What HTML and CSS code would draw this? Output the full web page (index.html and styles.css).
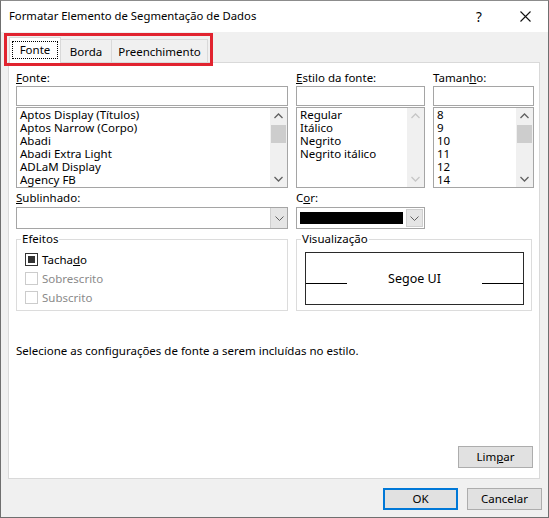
FILE: index.html
```html
<!DOCTYPE html>
<html lang="pt">
<head>
<meta charset="utf-8">
<title>Formatar Elemento de Segmentação de Dados</title>
<link rel="stylesheet" href="styles.css">
</head>
<body>
<div class="window">
  <div class="titlebar">
    <div class="title">Formatar Elemento de Segmentação de Dados</div>
    <div class="tb-btn help">?</div>
    <div class="tb-btn close">
      <svg width="11" height="11" viewBox="0 0 11 11"><path d="M0.5 0.5L10.5 10.5M10.5 0.5L0.5 10.5" stroke="#111" stroke-width="1.1" fill="none"/></svg>
    </div>
  </div>

  <div class="tabs">
    <div class="tab active"><span class="focus">Fonte</span></div>
    <div class="tab">Borda</div>
    <div class="tab">Preenchimento</div>
    <div class="highlight"></div>
  </div>

  <div class="panel">
    <div class="grid3">
      <div class="col">
        <div class="label"><u>F</u>onte:</div>
        <div class="input"></div>
        <div class="list">
          <div class="items">
            <div>Aptos Display (Títulos)</div>
            <div>Aptos Narrow (Corpo)</div>
            <div>Abadi</div>
            <div>Abadi Extra Light</div>
            <div>ADLaM Display</div>
            <div>Agency FB</div>
          </div>
          <div class="scrollbar">
            <svg class="arrow" width="17" height="17" viewBox="0 0 17 17"><polyline points="4.5,10 8.5,6 12.5,10" stroke="#606060" stroke-width="1.3" fill="none"/></svg>
            <div class="thumb"></div>
            <div class="track"></div>
            <svg class="arrow" width="17" height="17" viewBox="0 0 17 17"><polyline points="4.5,7 8.5,11 12.5,7" stroke="#606060" stroke-width="1.3" fill="none"/></svg>
          </div>
        </div>
      </div>
      <div class="col">
        <div class="label"><u>E</u>stilo da fonte:</div>
        <div class="input"></div>
        <div class="list">
          <div class="items">
            <div>Regular</div>
            <div>Itálico</div>
            <div>Negrito</div>
            <div>Negrito itálico</div>
          </div>
          <div class="scrollbar">
            <svg class="arrow" width="17" height="17" viewBox="0 0 17 17"><polyline points="4.5,10 8.5,6 12.5,10" stroke="#c6c6c6" stroke-width="1.3" fill="none"/></svg>
            <div class="track"></div>
            <svg class="arrow" width="17" height="17" viewBox="0 0 17 17"><polyline points="4.5,7 8.5,11 12.5,7" stroke="#c6c6c6" stroke-width="1.3" fill="none"/></svg>
          </div>
        </div>
      </div>
      <div class="col">
        <div class="label">Taman<u>h</u>o:</div>
        <div class="input"></div>
        <div class="list">
          <div class="items">
            <div>8</div>
            <div>9</div>
            <div>10</div>
            <div>11</div>
            <div>12</div>
            <div>14</div>
          </div>
          <div class="scrollbar">
            <svg class="arrow" width="17" height="17" viewBox="0 0 17 17"><polyline points="4.5,10 8.5,6 12.5,10" stroke="#606060" stroke-width="1.3" fill="none"/></svg>
            <div class="thumb"></div>
            <div class="track"></div>
            <svg class="arrow" width="17" height="17" viewBox="0 0 17 17"><polyline points="4.5,7 8.5,11 12.5,7" stroke="#606060" stroke-width="1.3" fill="none"/></svg>
          </div>
        </div>
      </div>
    </div>

    <div class="grid2">
      <div class="col">
        <div class="label label2"><u>S</u>ublinhado:</div>
        <div class="select wide">
          <div class="select-value"></div>
          <div class="drop">
            <svg width="15" height="18" viewBox="0 0 15 18"><polyline points="3.5,7.5 7.5,11.5 11.5,7.5" stroke="#606060" stroke-width="1" fill="none"/></svg>
          </div>
        </div>
      </div>
      <div class="col">
        <div class="label label2">C<u>o</u>r:</div>
        <div class="select color">
          <div class="select-value"><div class="swatch"></div></div>
          <div class="drop">
            <svg width="15" height="18" viewBox="0 0 15 18"><polyline points="3.5,7.5 7.5,11.5 11.5,7.5" stroke="#606060" stroke-width="1" fill="none"/></svg>
          </div>
        </div>
      </div>

      <fieldset class="group">
        <legend>Efeitos</legend>
        <div class="check-row">
          <span class="checkbox mixed"><span class="mark"></span></span>
          <span>Tacha<u>d</u>o</span>
        </div>
        <div class="check-row disabled">
          <span class="checkbox"></span>
          <span>Sobrescrito</span>
        </div>
        <div class="check-row disabled">
          <span class="checkbox"></span>
          <span>Subscrito</span>
        </div>
      </fieldset>

      <fieldset class="group">
        <legend>Visualização</legend>
        <div class="preview">
          <div class="base-line"></div>
          <div class="sample">Segoe UI</div>
          <div class="base-line"></div>
        </div>
      </fieldset>
    </div>

    <div class="message">Selecione as configurações de fonte a serem incluídas no estilo.</div>

    <div class="panel-actions">
      <div class="button">Lim<u>p</u>ar</div>
    </div>
  </div>

  <div class="footer">
    <div class="button default">OK</div>
    <div class="button">Cancelar</div>
  </div>
</div>
</body>
</html>
```

FILE: styles.css
```css
* {
  box-sizing: border-box;
}

html, body {
  margin: 0;
  padding: 0;
  background: #ffffff;
}

body {
  width: 549px;
  height: 518px;
  overflow: hidden;
  font-family: "Noto Sans", "Open Sans", sans-serif;
  font-size: 11.5px;
  color: #000;
}

u {
  text-decoration: underline;
  text-underline-offset: 1px;
}

.window {
  width: 549px;
  height: 518px;
  border: 1px solid #6f6f6f;
  border-top-color: #8c8c8c;
  background: #f0f0f0;
  display: flex;
  flex-direction: column;
}

/* Title bar */
.titlebar {
  height: 31px;
  background: #ffffff;
  display: flex;
  align-items: center;
  padding-left: 8px;
  flex: none;
}

.title {
  flex: 1;
  font-size: 11.3px;
  line-height: 16px;
  padding-bottom: 1px;
}

.tb-btn {
  width: 46px;
  height: 31px;
  display: flex;
  align-items: center;
  justify-content: center;
}

.help {
  font-size: 13.5px;
  line-height: 16px;
}

/* Tabs */
.tabs {
  position: relative;
  height: 30px;
  display: flex;
  align-items: flex-end;
  padding-left: 8px;
  flex: none;
  z-index: 2;
}

.tab {
  height: 23px;
  padding: 0 4px;
  border: 1px solid #d9d9d9;
  border-bottom: none;
  background: #f0f0f0;
  margin-left: -1px;
  display: flex;
  align-items: center;
  justify-content: center;
  line-height: 15px;
}

.tab:nth-child(2) {
  width: 52px;
}

.tab:nth-child(3) {
  width: 97px;
}

.tab.active {
  margin-left: 0;
  width: 52px;
  height: 26px;
  margin-bottom: -1px;
  background: #ffffff;
  padding: 0 2px 2px 2px;
  z-index: 1;
}

.focus {
  display: block;
  width: 100%;
  border: 1px dotted #000;
  text-align: center;
  line-height: 15px;
  padding: 0 0 1px;
}

.highlight {
  position: absolute;
  left: 3px;
  top: 1px;
  width: 209px;
  height: 33px;
  border: 3px solid #e1232f;
  z-index: 3;
}

/* Panel */
.panel {
  margin: 0 8px 0 7px;
  height: 417px;
  border: 1px solid #d9d9d9;
  background: #ffffff;
  padding: 8px 4px 10px 7px;
  display: flex;
  flex-direction: column;
  flex: none;
}

.grid3 {
  display: grid;
  grid-template-columns: 272px 129px 101px;
  column-gap: 8px;
}

.col {
  display: flex;
  flex-direction: column;
}

.label {
  line-height: 14px;
  height: 15px;
}

.input {
  height: 20px;
  border: 1px solid #a5a5a5;
  background: #fff;
}

.list {
  margin-top: 1px;
  height: 81px;
  border: 1px solid #a5a5a5;
  display: flex;
  background: #fff;
}

.items {
  flex: 1;
  padding-left: 3px;
  line-height: 13px;
  overflow: hidden;
  white-space: nowrap;
}

.scrollbar {
  width: 17px;
  background: #f0f0f0;
  display: flex;
  flex-direction: column;
}

.arrow {
  display: block;
  flex: none;
}

.thumb {
  height: 18px;
  margin: 0 1px;
  background: #cdcdcd;
  flex: none;
}

.track {
  flex: 1;
}

/* Second section */
.grid2 {
  margin-top: 3px;
  display: grid;
  grid-template-columns: 272px 236px;
  column-gap: 8px;
}

.label2 {
  height: 16px;
  line-height: 14px;
}

.select {
  height: 22px;
  border: 1px solid #a5a5a5;
  background: #fff;
  display: flex;
}

.select.color {
  width: 129px;
}

.select-value {
  flex: 1;
  padding: 3px 2px 3px 3px;
}

.swatch {
  height: 12px;
  margin-top: 1px;
  background: #000;
}

.drop {
  width: 17px;
  margin: 1px;
  background: #e5e5e5;
  border: 1px solid #cfcfcf;
  display: flex;
  align-items: center;
  justify-content: center;
}

.select.wide .drop {
  margin: 0;
  border-width: 0 0 0 1px;
}

.group {
  margin: 3px 0 0 0;
  padding: 4px 4px 3px 4px;
  border: 1px solid #dcdcdc;
  min-width: 0;
}

.group legend {
  padding: 0 1px;
  line-height: 14px;
}

.check-row {
  height: 19px;
  display: flex;
  align-items: center;
  padding-left: 4px;
  gap: 4px;
}

.check-row.disabled {
  color: #8a8a8a;
}

.checkbox {
  width: 13px;
  height: 13px;
  border: 1px solid #cccccc;
  background: #fff;
  display: flex;
  align-items: center;
  justify-content: center;
  flex: none;
}

.checkbox.mixed {
  border-color: #333333;
}

.mark {
  width: 7px;
  height: 7px;
  background: #333333;
}

.preview {
  margin: 2px 3px 0 4px;
  height: 53px;
  border: 1px solid #2a2a2a;
  display: flex;
  justify-content: space-between;
  align-items: flex-start;
}

.base-line {
  width: 41px;
  height: 31px;
  border-bottom: 1px solid #000;
}

.sample {
  margin-top: 18px;
  font-size: 12.5px;
  line-height: 16px;
}

.message {
  margin-top: 33px;
  line-height: 14px;
}

.panel-actions {
  margin-top: auto;
  display: flex;
  justify-content: flex-end;
  padding-right: 2px;
}

/* Buttons */
.button {
  width: 75px;
  height: 22px;
  border: 1px solid #adadad;
  background: #e1e1e1;
  display: flex;
  align-items: center;
  justify-content: center;
  line-height: 14px;
  padding-bottom: 1px;
}

.button.default {
  border: 2px solid #0078d7;
}

.footer {
  flex: 1;
  display: flex;
  justify-content: flex-end;
  align-items: flex-start;
  gap: 9px;
  padding: 9px 6px 0 0;
}
```
